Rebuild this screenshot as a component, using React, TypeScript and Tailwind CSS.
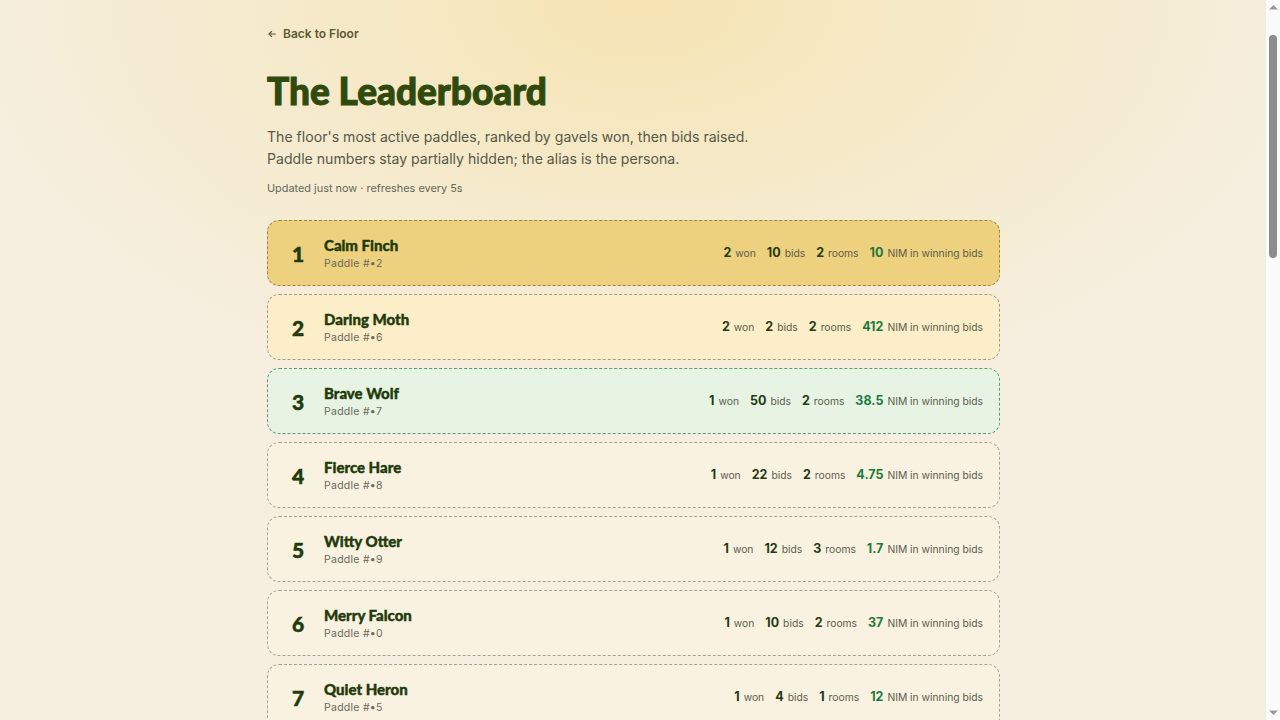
import React from "react";

type Entry = {
    alias: string;
    paddle: string;
    won: number;
    bids: number;
    rooms: number;
    nim: string;
};

const entries: Entry[] = [
    { alias: "Calm Finch", paddle: "2", won: 2, bids: 10, rooms: 2, nim: "10" },
    { alias: "Daring Moth", paddle: "6", won: 2, bids: 2, rooms: 2, nim: "412" },
    { alias: "Brave Wolf", paddle: "7", won: 1, bids: 50, rooms: 2, nim: "38.5" },
    { alias: "Fierce Hare", paddle: "8", won: 1, bids: 22, rooms: 2, nim: "4.75" },
    { alias: "Witty Otter", paddle: "9", won: 1, bids: 12, rooms: 3, nim: "1.7" },
    { alias: "Merry Falcon", paddle: "0", won: 1, bids: 10, rooms: 2, nim: "37" },
    { alias: "Quiet Heron", paddle: "5", won: 1, bids: 4, rooms: 1, nim: "12" },
    { alias: "Bold Badger", paddle: "3", won: 1, bids: 3, rooms: 1, nim: "8" },
    { alias: "Swift Lynx", paddle: "1", won: 0, bids: 18, rooms: 2, nim: "0" },
    { alias: "Gentle Crane", paddle: "4", won: 0, bids: 9, rooms: 2, nim: "0" },
    { alias: "Lucky Raven", paddle: "7", won: 0, bids: 7, rooms: 1, nim: "0" },
    { alias: "Sly Fox", paddle: "2", won: 0, bids: 6, rooms: 1, nim: "0" },
    { alias: "Keen Owl", paddle: "9", won: 0, bids: 5, rooms: 1, nim: "0" },
    { alias: "Noble Stag", paddle: "6", won: 0, bids: 4, rooms: 1, nim: "0" },
    { alias: "Eager Wren", paddle: "3", won: 0, bids: 3, rooms: 1, nim: "0" },
    { alias: "Proud Lion", paddle: "8", won: 0, bids: 3, rooms: 1, nim: "0" },
    { alias: "Shy Robin", paddle: "0", won: 0, bids: 2, rooms: 1, nim: "0" },
    { alias: "Jolly Seal", paddle: "5", won: 0, bids: 2, rooms: 1, nim: "0" },
    { alias: "Brisk Newt", paddle: "1", won: 0, bids: 2, rooms: 1, nim: "0" },
    { alias: "Clever Mole", paddle: "4", won: 0, bids: 1, rooms: 1, nim: "0" },
    { alias: "Silent Lark", paddle: "7", won: 0, bids: 1, rooms: 1, nim: "0" },
    { alias: "Wild Bison", paddle: "2", won: 0, bids: 1, rooms: 1, nim: "0" },
    { alias: "Calm Gecko", paddle: "9", won: 0, bids: 1, rooms: 1, nim: "0" },
    { alias: "Tidy Panda", paddle: "6", won: 0, bids: 1, rooms: 1, nim: "0" },
];

const rowStyles = [
    "bg-[#eed17e] border-[#9a8552]",
    "bg-[#fbeec8] border-[#a39a85]",
    "bg-[#e7f4e3] border-[#5f9a6a]",
];

const Stat: React.FC<{ value: React.ReactNode; label: string; accent?: boolean }> = ({
    value,
    label,
    accent,
}) => (
    <span className="inline-flex items-baseline gap-1 whitespace-nowrap">
        <span
            className={`text-[12.5px] font-bold ${accent ? "text-[#1c7a3c]" : "text-[#243a10]"}`}
        >
            {value}
        </span>
        <span className="text-[10.3px] text-[#5b5e4c]">{label}</span>
    </span>
);

const Row: React.FC<{ entry: Entry; rank: number }> = ({ entry, rank }) => {
    const style = rowStyles[rank - 1] ?? "bg-[#f9f2e1] border-[#a6a195]";
    return (
        <li
            className={`flex h-[66px] items-center rounded-xl border border-dashed px-4 ${style}`}
        >
            <div className="w-[28px] text-center font-['Lato',sans-serif] text-[21px] font-black text-[#1f3a0b] [-webkit-text-stroke:0.5px_#1f3a0b]">
                {rank}
            </div>
            <div className="ml-[12px] flex flex-col">
                <span className="font-['Lato',sans-serif] text-[15px] font-black leading-[20px] text-[#1f3a0b] [-webkit-text-stroke:0.4px_#1f3a0b]">
                    {entry.alias}
                </span>
                <span className="mt-[1px] text-[10.5px] leading-[16px] tracking-wide text-[#6b6a5c]">
                    Paddle #•{entry.paddle}
                </span>
            </div>
            <div className="ml-auto flex items-baseline gap-[11px]">
                <Stat value={entry.won} label="won" />
                <Stat value={entry.bids} label="bids" />
                <Stat value={entry.rooms} label="rooms" />
                <Stat value={entry.nim} label="NIM in winning bids" accent />
            </div>
        </li>
    );
};

const Scrollbar: React.FC = () => (
    <div className="fixed right-0 top-0 flex h-screen w-[15px] flex-col items-center border-l border-[#ececec] bg-[#fbfbfb]">
        <svg width="9" height="6" viewBox="0 0 9 6" className="mt-[4px]">
            <path d="M0 5.5L4.5 1 9 5.5Z" fill="#9b9b9b" />
        </svg>
        <div className="mt-[25px] h-[223px] w-[8px] rounded-full bg-[#8c8c8c]" />
        <svg width="9" height="6" viewBox="0 0 9 6" className="mb-[4px] mt-auto">
            <path d="M0 0.5L4.5 5 9 0.5Z" fill="#9b9b9b" />
        </svg>
    </div>
);

const App: React.FC = () => {
    return (
        <div className="min-h-screen bg-[#f6efe0] bg-[radial-gradient(ellipse_700px_420px_at_50%_0%,#f6e4b3_0%,#f5e9c8_45%,rgba(246,239,224,0)_100%)] pr-[13px] font-['Inter',sans-serif]">
            <main className="mx-auto w-[733px] pb-16 pt-[21px]">
                <a
                    href="#"
                    className="inline-flex items-center gap-[6px] text-[12px] font-semibold text-[#5a5a35]"
                >
                    <svg
                        width="10"
                        height="10"
                        viewBox="0 0 24 24"
                        fill="none"
                        stroke="currentColor"
                        strokeWidth="2.8"
                        strokeLinecap="round"
                        strokeLinejoin="round"
                    >
                        <path d="M20 12H5" />
                        <path d="M11 18l-6-6 6-6" />
                    </svg>
                    Back to Floor
                </a>

                <h1 className="mt-[24px] font-['Lato',sans-serif] text-[37px] font-black leading-[44px] tracking-normal text-[#2f4a0c] [-webkit-text-stroke:1px_#2f4a0c]">
                    The Leaderboard
                </h1>

                <p className="mt-[13px] text-[14.1px] leading-[22px] text-[#55584a]">
                    The floor's most active paddles, ranked by gavels won, then bids raised.
                    <br />
                    Paddle numbers stay partially hidden; the alias is the persona.
                </p>

                <p className="mt-[10px] text-[10.9px] text-[#66685a]">
                    Updated just now · refreshes every 5s
                </p>

                <ol className="mt-[24px] flex flex-col gap-2">
                    {entries.map((e, i) => (
                        <Row key={i} entry={e} rank={i + 1} />
                    ))}
                </ol>
            </main>
            <Scrollbar />
        </div>
    );
};

export default App;
